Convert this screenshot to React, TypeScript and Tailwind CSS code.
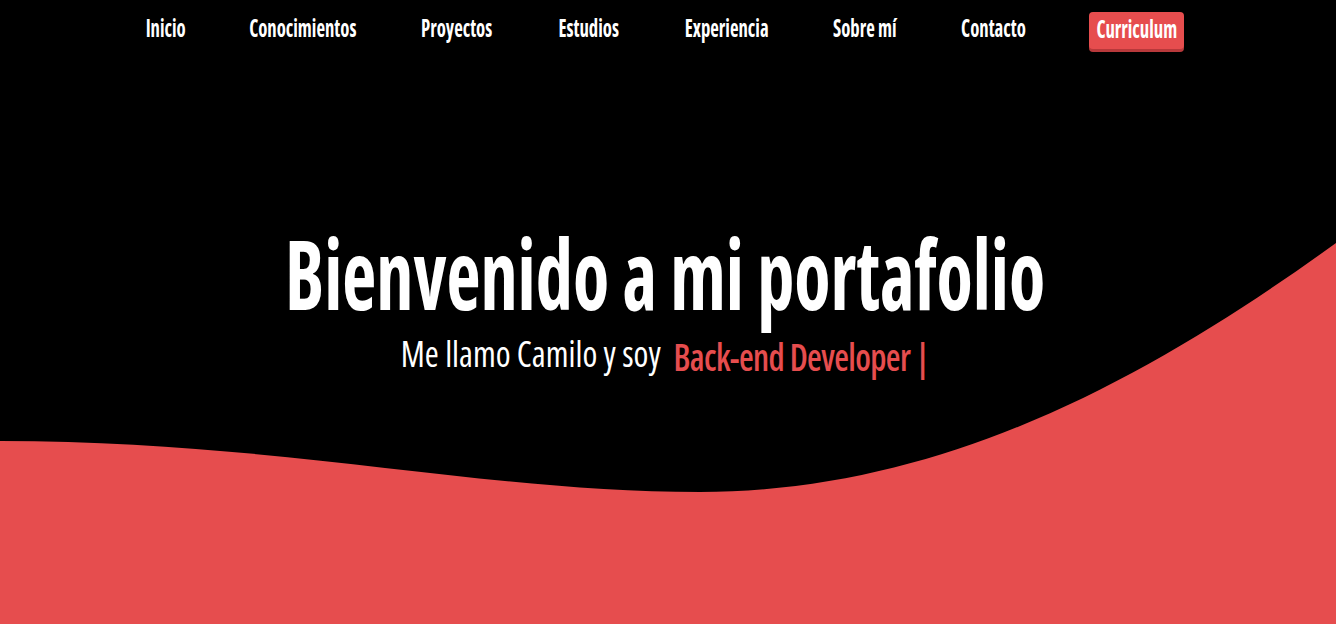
const NAV_ITEMS = [
  { label: 'Inicio', width: 'w-[39px]' },
  { label: 'Conocimientos', width: 'w-[108px]' },
  { label: 'Proyectos', width: 'w-[72px]' },
  { label: 'Estudios', width: 'w-[63px]' },
  { label: 'Experiencia', width: 'w-[85px]' },
  { label: 'Sobre mí', width: 'w-[64px]' },
  { label: 'Contacto', width: 'w-[64px]' },
];

function Wave() {
  return (
    <svg
      className="absolute inset-0 h-full w-full"
      viewBox="0 0 1336 624"
      preserveAspectRatio="none"
      aria-hidden="true"
    >
      <path
        d="M0,441 C280,441 480,492 700,492 C950,492 1160,370 1336,243 L1336,624 L0,624 Z"
        fill="#e64d4e"
      />
    </svg>
  );
}

function Navbar() {
  return (
    <nav className="flex items-start justify-center gap-16 pt-[12px]">
      {NAV_ITEMS.map((item) => (
        <a key={item.label} href="#" className={`${item.width} flex justify-center pt-[4px] text-white`}>
          <span className="inline-block scale-x-[0.78] whitespace-nowrap text-[24px] font-bold leading-none">
            {item.label}
          </span>
        </a>
      ))}
      <a
        href="#"
        className="flex w-[95px] justify-center rounded-[4px] bg-[#e64d4e] pt-[5px] pb-[8px] text-white shadow-[0_3px_0_#b8393b]"
      >
        <span className="inline-block scale-x-[0.78] whitespace-nowrap text-[24px] font-bold leading-none">
          Curriculum
        </span>
      </a>
    </nav>
  );
}

export default function App() {
  return (
    <div className="relative h-[624px] w-full overflow-hidden bg-black font-['Open_Sans',sans-serif] font-stretch-condensed">
      <Wave />
      <div className="relative flex flex-col pr-[6px]">
        <Navbar />
        <header className="mt-[176px] flex flex-col items-center">
          <h1 className="scale-x-[0.774] whitespace-nowrap text-[96px] font-bold leading-none text-white">
            Bienvenido a mi portafolio
          </h1>
          {/* typed text sits a few px lower than the static part */}
          <p className="mt-[13px] flex scale-x-[0.914] items-start whitespace-nowrap text-[37px] leading-none">
            <span className="font-normal text-white">Me llamo Camilo y soy</span>
            <span className="ml-[14px] mt-[4px] font-semibold tracking-[-0.7px] text-[#e64d4e]">Back-end Developer |</span>
          </p>
        </header>
      </div>
    </div>
  );
}
